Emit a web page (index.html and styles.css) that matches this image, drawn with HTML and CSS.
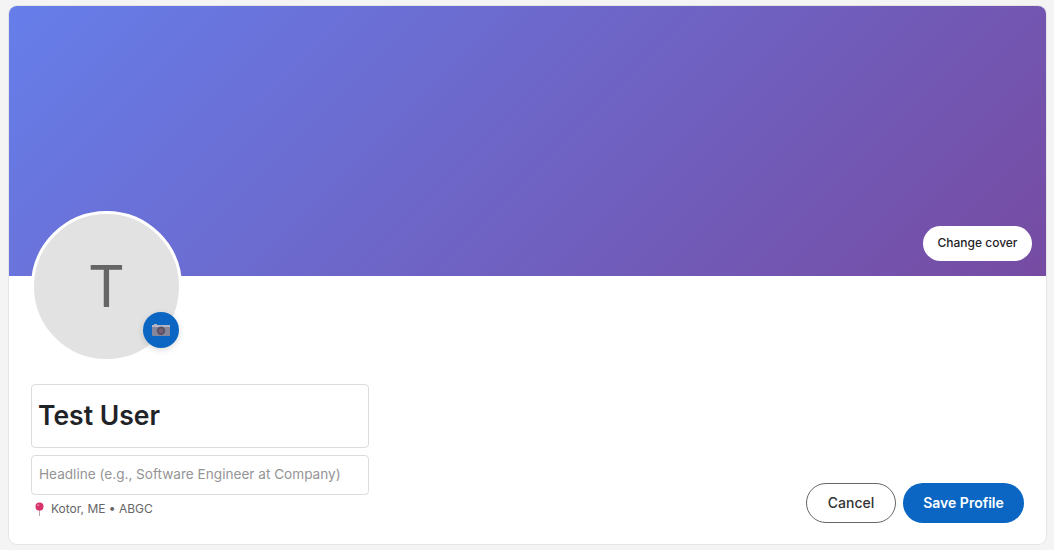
FILE: index.html
```html
<!DOCTYPE html>
<html lang="en">
<head>
    <meta charset="UTF-8">
    <title>Edit Profile</title>
    <link rel="stylesheet" href="styles.css">
</head>
<body>
    <div class="card">
        <div class="cover">
            <button class="cover-btn">Change cover</button>
        </div>
        <div class="card-body">
            <div class="avatar">
                <span class="avatar-letter">T</span>
                <span class="avatar-badge">
                    <svg width="20" height="16" viewBox="0 0 20 16">
                        <rect x="1" y="3" width="18" height="11" rx="1" fill="#85869a"/>
                        <rect x="1" y="3" width="18" height="2" fill="#b4b6c6"/>
                        <rect x="3" y="2" width="3" height="1.5" fill="#b4b6c6"/>
                        <circle cx="10" cy="8.8" r="4.2" fill="#565267"/>
                        <circle cx="10" cy="8.8" r="2.2" fill="#7a5f72"/>
                    </svg>
                </span>
            </div>
            <div class="row">
                <div class="fields">
                    <input class="input input-name" type="text" value="Test User">
                    <input class="input input-headline" type="text" placeholder="Headline (e.g., Software Engineer at Company)">
                    <div class="location">
                        <svg width="11" height="14" viewBox="0 0 11 14">
                            <rect x="5" y="6" width="1" height="8" fill="#b9a6a8"/>
                            <circle cx="5.5" cy="4.6" r="4" fill="#d6336c"/>
                            <circle cx="4.2" cy="3.2" r="1" fill="#f08bb0"/>
                        </svg>
                        <span>Kotor, ME • ABGC</span>
                    </div>
                </div>
                <div class="actions">
                    <button class="btn btn-cancel">Cancel</button>
                    <button class="btn btn-save">Save Profile</button>
                </div>
            </div>
        </div>
    </div>
</body>
</html>
```

FILE: styles.css
```css
* {
    box-sizing: border-box;
}
body {
    margin: 0;
    padding: 6px 8px 6px 9px;
    background-color: #f4f4f4;
    font-family: 'Inter', 'Liberation Sans', sans-serif;
    color: #1f2328;
}
.card {
    height: 538px;
    background-color: #ffffff;
    border-radius: 8px;
    box-shadow: 0 0 0 1px rgba(0,0,0,0.06);
    overflow: hidden;
}
.cover {
    height: 270px;
    background: linear-gradient(135deg, #667eea 0%, #764ba2 100%);
    position: relative;
}
.cover-btn {
    position: absolute;
    right: 14px;
    bottom: 15px;
    height: 35px;
    width: 109px;
    padding: 0 0 2px;
    border: none;
    border-radius: 18px;
    background-color: #ffffff;
    color: #1f2328;
    font-family: inherit;
    font-size: 12px;
    font-weight: 500;
}
.card-body {
    padding: 0 22px;
}
.avatar {
    width: 151px;
    height: 151px;
    margin-top: -65px;
    margin-bottom: -1px;
    border: 3px solid #ffffff;
    border-radius: 50%;
    background-color: #e2e2e2;
    display: flex;
    justify-content: center;
    align-items: center;
    position: relative;
}
.avatar-letter {
    font-size: 57px;
    font-weight: 400;
    color: #666666;
}
.avatar-badge {
    position: absolute;
    right: 0;
    bottom: 11px;
    width: 36px;
    height: 36px;
    border-radius: 50%;
    background-color: #0a66c2;
    box-shadow: 0 2px 6px rgba(0,0,0,0.15);
    display: flex;
    justify-content: center;
    align-items: center;
}
.row {
    display: flex;
    justify-content: space-between;
    align-items: flex-end;
    margin-top: 23px;
}
.fields {
    width: 338px;
    display: flex;
    flex-direction: column;
}
.input {
    width: 100%;
    border: 1px solid #dcdcdc;
    border-radius: 4px;
    padding: 0 7px;
    font-family: inherit;
    color: #1f2328;
    outline: none;
}
.input-name {
    height: 64px;
    padding: 0 0 2px 6px;
    font-size: 26.5px;
    font-weight: 600;
}
.input-headline {
    height: 40px;
    margin-top: 7px;
    padding-bottom: 3px;
    font-size: 13.6px;
}
.input-headline::placeholder {
    color: #949494;
}
.location {
    display: flex;
    align-items: center;
    gap: 6px;
    margin-top: 6px;
    padding-left: 3px;
    font-size: 12px;
    color: #666666;
}
.actions {
    display: flex;
    gap: 7px;
    margin-bottom: -7px;
}
.btn {
    height: 40px;
    border-radius: 20px;
    font-family: inherit;
    font-size: 14px;
    padding: 0 0 2px;
}
.btn-cancel {
    width: 90px;
    background-color: #ffffff;
    border: 1px solid #666666;
    color: #333333;
    font-weight: 500;
}
.btn-save {
    width: 121px;
    background-color: #0a66c2;
    border: none;
    color: #ffffff;
    font-weight: 600;
}
```
